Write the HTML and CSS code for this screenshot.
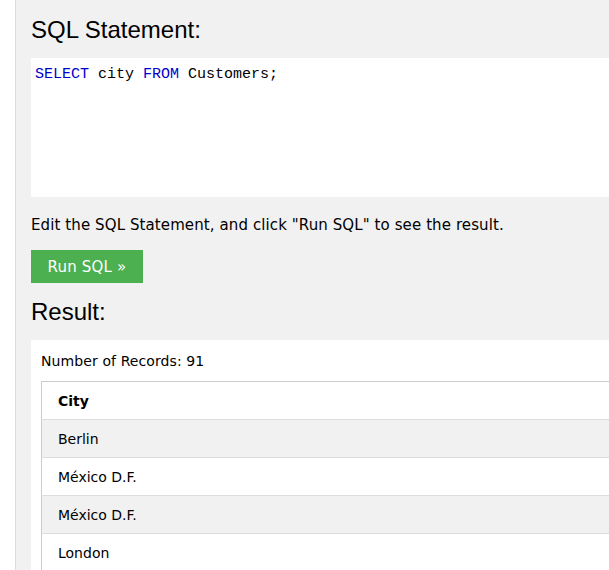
FILE: index.html
```html
<!DOCTYPE html>
<html>
<head>
<meta charset="utf-8">
<link rel="stylesheet" href="styles.css">
</head>
<body>
<div class="page">
  <div class="panel">
    <h3 class="heading">SQL Statement:</h3>
    <div class="code"><span class="kw">SELECT</span> city <span class="kw">FROM</span> Customers;</div>
    <p class="hint">Edit the SQL Statement, and click "Run SQL" to see the result.</p>
    <button class="run">Run SQL »</button>
    <h3 class="heading result-h">Result:</h3>
    <div class="result">
      <div class="count">Number of Records: 91</div>
      <table class="table">
        <tr><th>City</th></tr>
        <tr class="alt"><td>Berlin</td></tr>
        <tr><td>México D.F.</td></tr>
        <tr class="alt"><td>México D.F.</td></tr>
        <tr><td>London</td></tr>
      </table>
    </div>
  </div>
</div>
</body>
</html>
```
FILE: styles.css
```css
html, body {
  margin: 0;
  padding: 0;
  background: #fff;
  overflow: hidden;
}
.page {
  height: 570px;
  padding-left: 15px;
  overflow: hidden;
}
.panel {
  background: #f1f1f1;
  border-left: 1px solid #dcdcdc;
  padding-left: 15px;
  height: 100%;
  overflow: hidden;
}
.heading {
  font-family: "Liberation Sans", Arial, sans-serif;
  font-weight: normal;
  font-size: 24px;
  line-height: 28px;
  margin: 0;
  padding-top: 16px;
  color: #000;
}
.code {
  margin-top: 14px;
  background: #fff;
  height: 139px;
  box-sizing: border-box;
  padding: 7px 4px;
  font-family: "Liberation Mono", "Courier New", monospace;
  font-size: 15px;
  line-height: 20px;
  color: #000;
  white-space: pre;
}
.kw {
  color: #0000cd;
}
.hint {
  font-family: "DejaVu Sans", Verdana, sans-serif;
  font-size: 15px;
  line-height: 22px;
  letter-spacing: 0.1px;
  margin: 17px 0 0 0;
  color: #000;
}
.run {
  display: block;
  margin-top: 14px;
  background: #4caf50;
  color: #fff;
  border: none;
  font-family: "DejaVu Sans", Verdana, sans-serif;
  font-size: 15px;
  letter-spacing: 0.2px;
  width: 112px;
  height: 33px;
  padding: 0;
  cursor: pointer;
}
.result-h {
  padding-top: 15px;
}
.result {
  margin-top: 14px;
  margin-right: -40px;
  background: #fff;
  padding: 11px 0 0 10px;
  height: 300px;
}
.count {
  font-family: "DejaVu Sans", Verdana, sans-serif;
  font-size: 14px;
  line-height: 20px;
  letter-spacing: 0.1px;
  color: #000;
}
.table {
  margin-top: 10px;
  border-collapse: collapse;
  width: 100%;
  border: 1px solid #ccc;
  font-family: "DejaVu Sans", Verdana, sans-serif;
  font-size: 14px;
  color: #000;
}
.table th, .table td {
  text-align: left;
  height: 37px;
  padding: 0 0 0 16px;
  border-bottom: 1px solid #ddd;
}
.table th {
  font-weight: bold;
}
.table .alt {
  background: #f1f1f1;
}
```
